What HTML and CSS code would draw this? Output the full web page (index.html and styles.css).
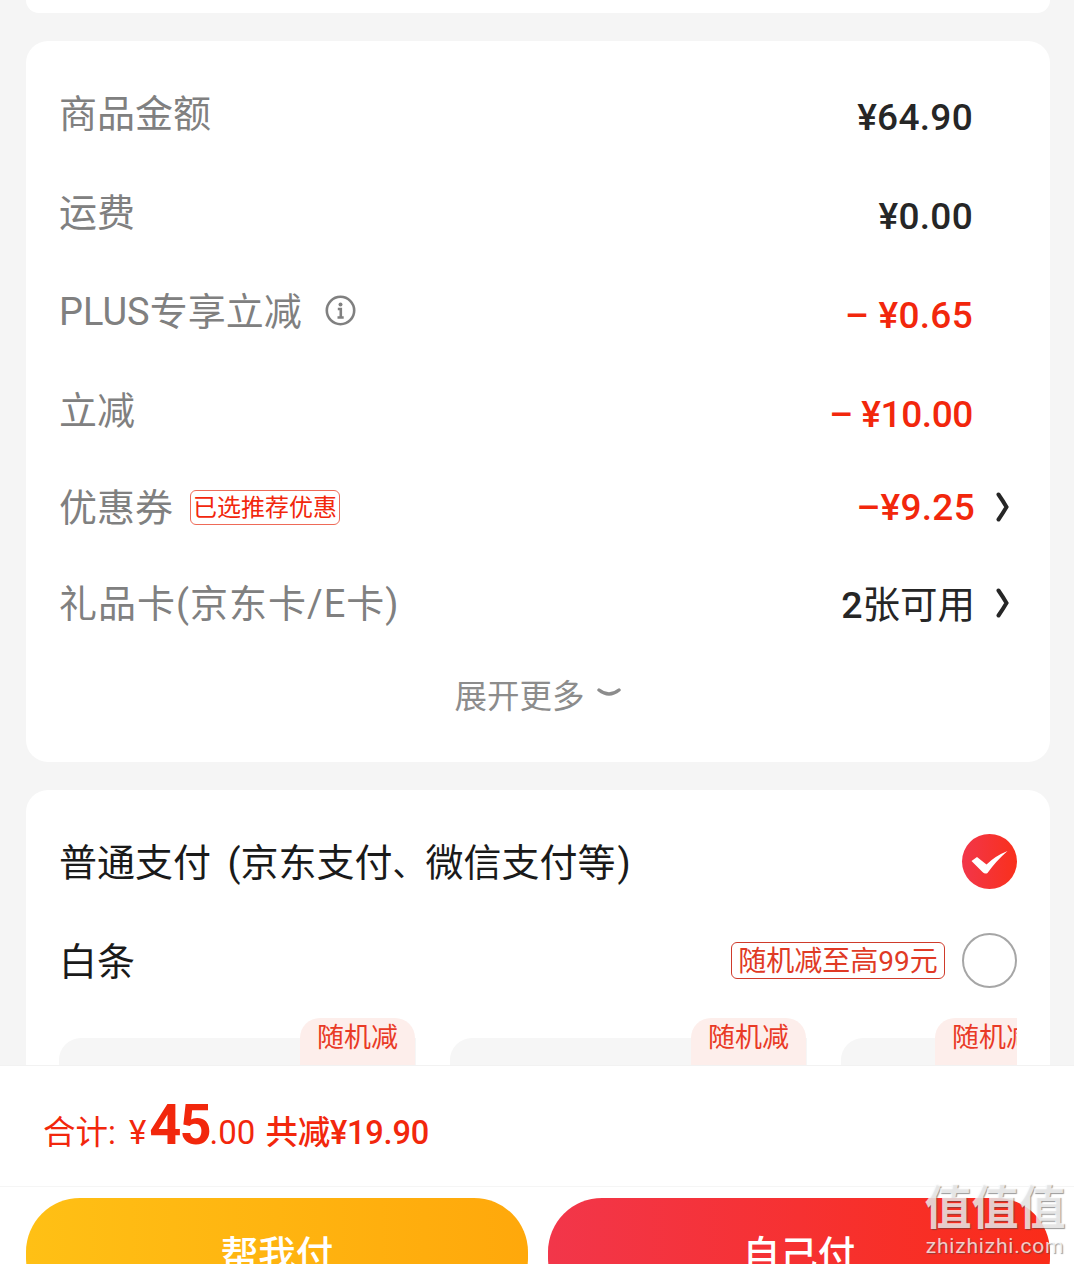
FILE: index.html
```html
<!DOCTYPE html>
<html lang="zh-CN">
<head>
    <meta charset="UTF-8">
    <meta name="viewport" content="width=device-width, initial-scale=1.0">
    <title>订单结算</title>
    <link rel="stylesheet" href="styles.css">
</head>
<body>
    <div class="page">
        <main class="content">
            <div class="card card-top"></div>

            <section class="card card-price">
                <div class="row">
                    <span class="label">商品金额</span>
                    <span class="amount">¥64.90</span>
                </div>
                <div class="row">
                    <span class="label">运费</span>
                    <span class="amount">¥0.00</span>
                </div>
                <div class="row">
                    <span class="label">PLUS专享立减</span>
                    <svg class="info-icon" viewBox="0 0 31 31">
                        <circle cx="15.5" cy="15.5" r="13.7" fill="none" stroke="#808080" stroke-width="2.6"/>
                        <circle cx="15.5" cy="9.5" r="2" fill="#808080"/>
                        <path d="M12.8 14h3v8M12.5 22.5h6.2" fill="none" stroke="#808080" stroke-width="2.6"/>
                    </svg>
                    <span class="amount red">–&nbsp;¥0.65</span>
                </div>
                <div class="row">
                    <span class="label">立减</span>
                    <span class="amount red tight">–&nbsp;¥10.00</span>
                </div>
                <div class="row row-link row-first">
                    <span class="label">优惠券</span>
                    <span class="tag tag-coupon">已选推荐优惠</span>
                    <span class="amount red">–¥9.25</span>
                    <svg class="arrow" viewBox="0 0 14 30">
                        <path d="M3 2.5Q7.5 9 11 15Q7.5 21 3 27.5" fill="none" stroke="#262626" stroke-width="4" stroke-linecap="round"/>
                    </svg>
                </div>
                <div class="row row-link">
                    <span class="label label-wide">礼品卡(京东卡/E卡)</span>
                    <span class="amount plain"><b class="count">2</b>张可用</span>
                    <svg class="arrow" viewBox="0 0 14 30">
                        <path d="M3 2.5Q7.5 9 11 15Q7.5 21 3 27.5" fill="none" stroke="#262626" stroke-width="4" stroke-linecap="round"/>
                    </svg>
                </div>
                <div class="more">
                    <span>展开更多</span>
                    <svg class="more-icon" viewBox="0 0 24 12">
                        <path d="M2 3Q12 11 22 3" fill="none" stroke="#8c8c8c" stroke-width="3.4" stroke-linecap="round"/>
                    </svg>
                </div>
            </section>

            <section class="card card-pay">
                <div class="pay-row">
                    <span class="pay-name pay-note">普通支付 (京东支付<span class="comma">、</span>微信支付等<span class="paren">)</span></span>
                    <span class="radio radio-on">
                        <svg viewBox="0 0 55 55">
                            <path d="M9.5 27L15 23Q20 27 24.5 30.5Q33 22 45.5 17Q34 27 25.5 39Q23 40.5 20.5 38Z" fill="#fff"/>
                        </svg>
                    </span>
                </div>
                <div class="pay-row">
                    <span class="pay-name">白条</span>
                    <span class="tag tag-promo">随机减至高99元</span>
                    <span class="radio"></span>
                </div>
                <div class="plans">
                    <div class="plan"><span class="plan-tag">随机减</span></div>
                    <div class="plan"><span class="plan-tag">随机减</span></div>
                    <div class="plan"><span class="plan-tag">随机减</span></div>
                </div>
            </section>
        </main>

        <footer class="footer">
            <div class="total">
                <span class="total-label">合计:</span>
                <span class="total-yen">¥</span><span class="total-int">45</span><span class="total-dec">.00</span>
                <span class="total-off">共减¥19.90</span>
            </div>
            <div class="actions">
                <div class="btn btn-help">帮我付</div>
                <div class="btn btn-self">自己付</div>
            </div>
        </footer>

        <div class="watermark">
            <div class="watermark-logo">值值值</div>
            <div class="watermark-url">zhizhizhi.com</div>
        </div>
    </div>
</body>
</html>
```

FILE: styles.css
```css
body {
    margin: 0;
    font-family: Roboto, "Noto Sans CJK SC", sans-serif;
    background-color: #f5f5f5;
}

.page {
    position: relative;
    height: 1264px;
    overflow: hidden;
    display: flex;
    flex-direction: column;
}

.content {
    height: 1065px;
    flex: none;
    overflow: hidden;
}

.card {
    background-color: #fff;
    border-radius: 22px;
    margin: 0 24px 28px 26px;
}

.card-top {
    height: 13px;
    border-radius: 0 0 22px 22px;
}

.card-price {
    height: 721px;
    padding: 24px 40px 0 33px;
    box-sizing: border-box;
}

/* price rows */
.row {
    display: flex;
    align-items: center;
    height: 99px;
}

.row-link {
    height: 96px;
}

.row-first {
    margin-top: -2px;
}

.label {
    font-size: 38px;
    color: #808080;
    position: relative;
    top: -4px;
}

.row-link .label {
    top: -3px;
}

.label-wide {
    letter-spacing: 1px;
}

.amount {
    margin-left: auto;
    margin-right: 37px;
    font-size: 37px;
    font-weight: 500;
    color: #262626;
    padding-top: 5px;
    letter-spacing: 0.3px;
}

.row-link .amount {
    margin-right: 20px;
    padding-top: 0;
}

.amount.red {
    color: #f2270c;
}

.amount.tight {
    letter-spacing: -0.4px;
}

.amount.plain {
    font-size: 37.5px;
    font-weight: 400;
    letter-spacing: 0;
    position: relative;
    top: -2px;
}

.count {
    font-weight: 500;
}

.info-icon {
    width: 31px;
    height: 31px;
    margin: 0 0 4px 23px;
}

.arrow {
    width: 15px;
    height: 30px;
    flex: none;
}

.tag {
    box-sizing: border-box;
    border: 1px solid #f2270c;
    border-radius: 6px;
    color: #f2270c;
    text-align: center;
    white-space: nowrap;
}

.tag-coupon {
    width: 150px;
    height: 35px;
    margin-left: 17px;
    border-color: #ee6a58;
    font-size: 24px;
    line-height: 35px;
}

.tag-promo {
    width: 214px;
    height: 37px;
    margin-left: auto;
    margin-right: 17px;
    border-color: #cf3b2b;
    color: #e03a25;
    font-size: 28px;
    line-height: 37px;
}

.more {
    display: flex;
    align-items: center;
    justify-content: center;
    gap: 12px;
    height: 84px;
    font-size: 32.5px;
    color: #8c8c8c;
    padding-left: 6px;
}

.more-icon {
    width: 24px;
    height: 12px;
}

/* payment */
.card-pay {
    padding: 22px 33px 0 33px;
}

.pay-row {
    display: flex;
    align-items: center;
    height: 99px;
}

.pay-name {
    font-size: 38px;
    color: #1a1a1a;
    white-space: nowrap;
    position: relative;
    top: -2px;
}

.pay-note {
    word-spacing: 7px;
}

.comma {
    font-size: 33px;
}

.paren {
    margin-left: 2px;
}

.radio {
    width: 55px;
    height: 55px;
    box-sizing: border-box;
    border: 2px solid #a6a6a6;
    border-radius: 50%;
    flex: none;
}

.pay-name + .radio {
    margin-left: auto;
}

.radio-on {
    border: none;
    background: linear-gradient(90deg, #f2364a, #f9301c);
}

.radio-on svg {
    display: block;
    width: 55px;
    height: 55px;
}

.plans {
    display: flex;
    gap: 34px;
    margin-top: 8px;
    overflow: hidden;
}

.plan {
    flex: none;
    width: 357px;
    height: 120px;
    margin-top: 20px;
    border-radius: 22px 0 0 0;
    background-color: #f6f6f6;
    position: relative;
}

.plan-tag {
    position: absolute;
    top: -20px;
    right: 1px;
    width: 115px;
    height: 60px;
    border-radius: 20px 20px 0 0;
    background-color: #fdeeeb;
    color: #e93a26;
    font-size: 27px;
    line-height: 40px;
    text-align: center;
}

.plan:last-child .plan-tag {
    left: 94px;
    right: auto;
}

/* footer */
.footer {
    flex: 1;
    background-color: #fff;
    border-top: 1px solid #f2f2f2;
}

.total {
    height: 121px;
    box-sizing: border-box;
    padding: 34px 0 0 43px;
    border-bottom: 1px solid #f5f5f5;
    color: #f2270c;
    font-size: 32.5px;
    white-space: nowrap;
}

.total-label {
    margin-right: 5px;
}

.total-yen {
    font-size: 33px;
}

.total-int {
    font-size: 56px;
    font-weight: 700;
    letter-spacing: -2px;
    line-height: 50px;
    margin-left: 3px;
}

.total-dec {
    font-size: 33px;
}

.total-off {
    margin-left: 2px;
    font-weight: 500;
    letter-spacing: -0.2px;
}

.actions {
    display: flex;
    gap: 20px;
    padding: 11px 24px 0 26px;
}

.btn {
    flex: 1;
    height: 114px;
    border-radius: 54px;
    color: #fff;
    font-size: 37.5px;
    font-weight: 500;
    text-align: center;
    line-height: 114px;
}

.btn-help {
    background: linear-gradient(90deg, #ffc015, #ffa80b);
}

.btn-self {
    background: linear-gradient(90deg, #f2364a, #fa2c19);
}

/* watermark over the page corner */
.watermark {
    position: absolute;
    left: 922px;
    top: 1180px;
    width: 146px;
    text-align: center;
    color: rgba(255, 255, 255, 0.75);
    text-shadow: 1px 1px 1px rgba(70, 70, 70, 0.55);
}

.watermark-logo {
    font-size: 47px;
    font-weight: 700;
    line-height: 56px;
    white-space: nowrap;
}

.watermark-url {
    font-size: 21px;
    line-height: 20px;
    letter-spacing: 0.8px;
}
```
